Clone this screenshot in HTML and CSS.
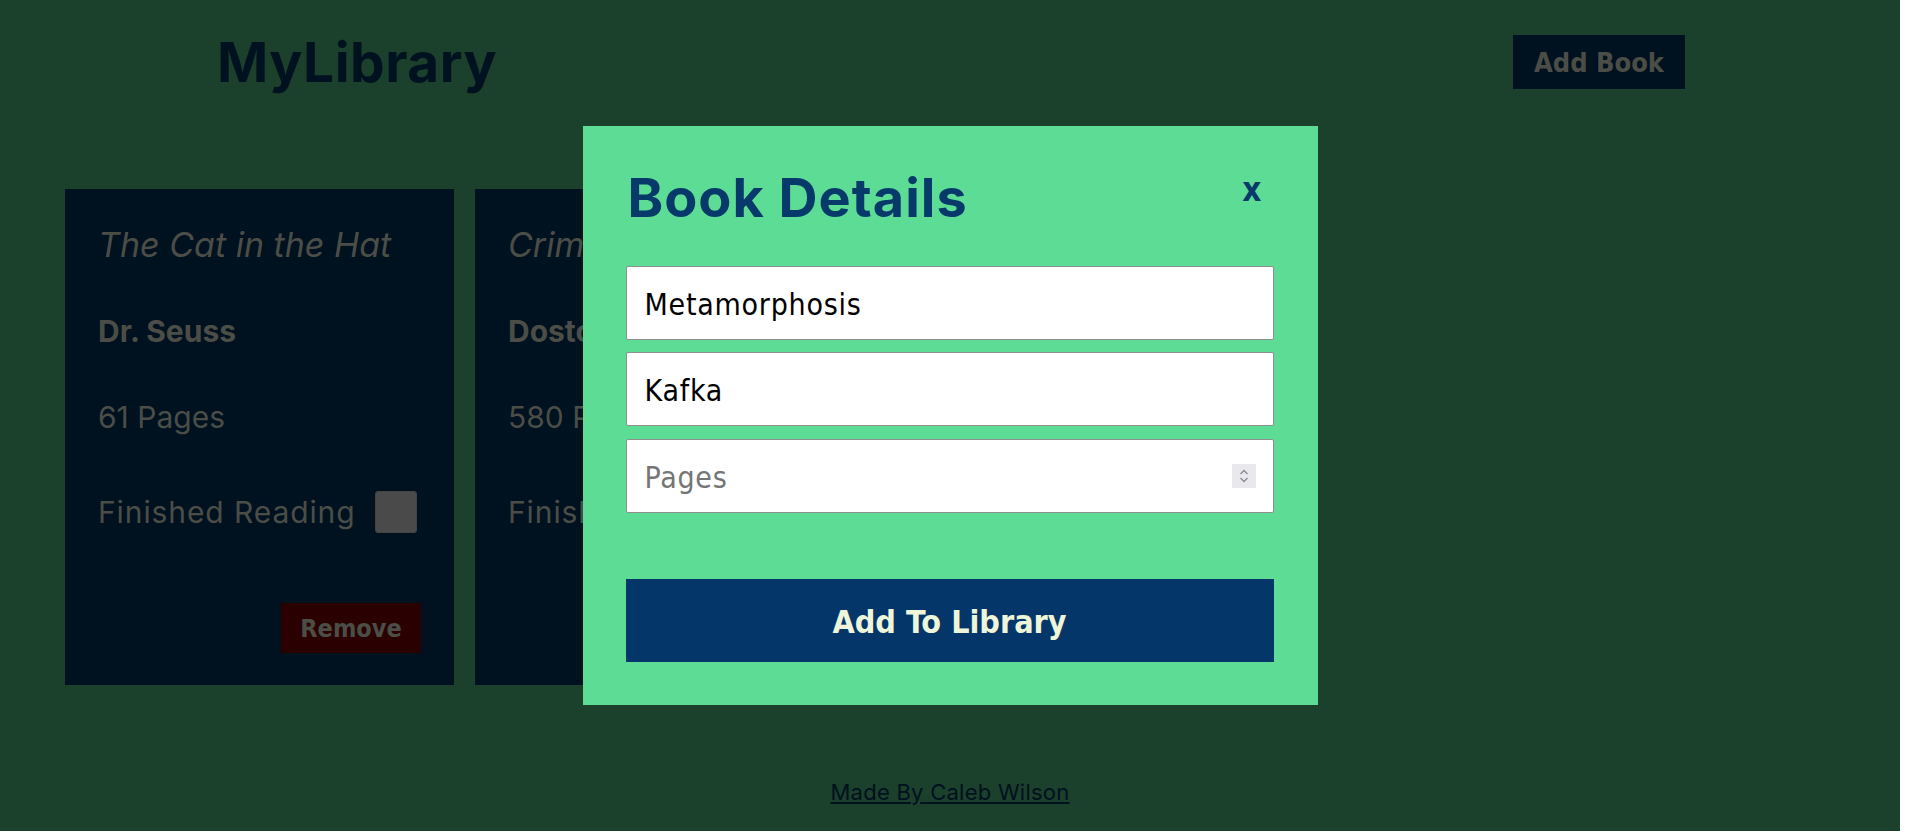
FILE: index.html
```html
<!DOCTYPE html>
<html lang="en">
<head>
<meta charset="utf-8">
<title>MyLibrary</title>
<link rel="stylesheet" href="styles.css">
</head>
<body>
<div class="page">
  <header class="header">
    <h1 class="logo">MyLibrary</h1>
    <button class="add-book">Add Book</button>
  </header>
  <main class="library">
    <article class="card">
      <p class="card-title">The Cat in the Hat</p>
      <p class="card-author">Dr. Seuss</p>
      <p class="card-pages">61 Pages</p>
      <label class="card-read">Finished Reading <span class="check"></span></label>
      <div class="card-actions"><button class="remove">Remove</button></div>
    </article>
    <article class="card">
      <p class="card-title">Crime and Punishment</p>
      <p class="card-author">Dostoevsky</p>
      <p class="card-pages">580 Pages</p>
      <label class="card-read">Finished Reading <span class="check"></span></label>
      <div class="card-actions"><button class="remove">Remove</button></div>
    </article>
  </main>
  <footer class="footer">
    <a href="#" class="credit">Made By Caleb Wilson</a>
  </footer>

  <div class="overlay">
    <form class="modal">
      <div class="modal-head">
        <h2 class="modal-title">Book Details</h2>
        <button type="button" class="close">x</button>
      </div>
      <input class="field" type="text" value="Metamorphosis">
      <input class="field" type="text" value="Kafka">
      <div class="number-wrap">
        <input class="field field-number" type="number" placeholder="Pages">
        <span class="spinner">
          <svg width="24" height="24" viewBox="0 0 24 24"><path d="M8.5 10 L12 6.5 L15.5 10" fill="none" stroke="#8b8b9a" stroke-width="1.4"/><path d="M8.5 14 L12 17.5 L15.5 14" fill="none" stroke="#8b8b9a" stroke-width="1.4"/></svg>
        </span>
      </div>
      <button type="button" class="submit">Add To Library</button>
    </form>
  </div>
</div>
</body>
</html>
```

FILE: styles.css
```css
* { box-sizing: border-box; }

html { background: #ffffff; }

body {
  margin: 0;
  font-family: "Inter", "Liberation Sans", sans-serif;
}

.page {
  position: relative;
  width: 1900px;
  height: 831px;
  background: #368056;
  display: flex;
  flex-direction: column;
  overflow: hidden;
}

.header {
  height: 124px;
  padding: 0 215px 0 217px;
  display: flex;
  align-items: center;
  justify-content: space-between;
}

.logo {
  margin: 0;
  font-size: 55px;
  line-height: 1;
  font-weight: 700;
  color: #00223e;
  letter-spacing: 0.5px;
}

.add-book {
  width: 172px;
  height: 54px;
  border: none;
  background: #00223e;
  color: #969a8e;
  font-family: "DejaVu Sans Condensed", "DejaVu Sans", sans-serif;
  font-stretch: semi-condensed;
  font-weight: 700;
  font-size: 27px;
  padding: 0;
}

.library {
  flex: 1;
  padding: 65px 0 0 65px;
  display: flex;
  gap: 21px;
  align-items: flex-start;
}

.card {
  width: 389px;
  height: 496px;
  background: #00223e;
  padding: 36px 33px 32px 33px;
  color: #969a8e;
  display: flex;
  flex-direction: column;
}

.card p { margin: 0; }

.card-title {
  font-size: 34px;
  line-height: 40px;
  font-style: italic;
  font-weight: 400;
  white-space: nowrap;
}

.card-author {
  margin-top: 46px !important;
  font-size: 30px;
  line-height: 40px;
  font-weight: 700;
}

.card-pages {
  margin-top: 46px !important;
  font-size: 30px;
  line-height: 40px;
}

.card-read {
  margin-top: 54px;
  display: flex;
  align-items: center;
  gap: 19px;
  font-size: 30px;
  line-height: 40px;
  letter-spacing: 0.9px;
  white-space: nowrap;
}

.check {
  width: 42px;
  height: 42px;
  border-radius: 3px;
  background: #949494;
  border: 1px solid #8a8a8a;
  flex: none;
}

.card-actions {
  margin-top: 70px;
  display: flex;
  justify-content: flex-end;
}

.remove {
  width: 140px;
  height: 50px;
  border: none;
  padding: 0;
  background: #540000;
  color: #969a8e;
  font-family: "DejaVu Sans Condensed", "DejaVu Sans", sans-serif;
  font-stretch: semi-condensed;
  font-weight: 700;
  font-size: 25px;
}

.footer {
  height: 78px;
  display: flex;
  align-items: center;
  justify-content: center;
}

.credit {
  color: #00223e;
  font-size: 22px;
  letter-spacing: 0.25px;
  line-height: 1.2;
}

.overlay {
  position: absolute;
  inset: 0;
  background: rgba(0, 0, 0, 0.5);
  display: flex;
  align-items: center;
  justify-content: center;
}

.modal {
  width: 735px;
  height: 579px;
  background: #5cdc94;
  padding: 45px 44px 43px 43px;
  display: flex;
  flex-direction: column;
}

.modal-head {
  display: flex;
  justify-content: space-between;
  align-items: flex-start;
  margin-bottom: 41px;
}

.modal-title {
  margin: 0 0 0 2px;
  font-size: 54px;
  line-height: 1;
  font-weight: 700;
  letter-spacing: 1px;
  color: #073a6a;
}

.close {
  margin: 2px 12px 0 0;
  padding: 0;
  border: none;
  background: none;
  color: #073a6a;
  font-family: "DejaVu Sans Condensed", "DejaVu Sans", sans-serif;
  font-weight: 700;
  font-size: 33px;
  line-height: 1;
}

.field {
  display: block;
  width: 100%;
  height: 74px;
  margin: 0 0 12px 0;
  padding: 2px 18px 0 18px;
  border: 1px solid #8f8f8f;
  border-radius: 2px;
  background: #ffffff;
  color: #000000;
  font-family: "DejaVu Sans Condensed", "DejaVu Sans", sans-serif;
  font-stretch: semi-condensed;
  font-size: 30px;
  letter-spacing: 0.75px;
  outline: none;
}

.field::placeholder { color: #757575; }

.field-number { appearance: textfield; -moz-appearance: textfield; }
.field-number::-webkit-inner-spin-button,
.field-number::-webkit-outer-spin-button { -webkit-appearance: none; margin: 0; }

.number-wrap {
  position: relative;
  margin-top: 1px;
}

.number-wrap .field { margin-bottom: 0; }

.spinner {
  position: absolute;
  right: 18px;
  top: 25px;
  width: 24px;
  height: 24px;
  background: #e9e9ed;
  display: flex;
}

.submit {
  margin-top: 66px;
  width: 100%;
  height: 83px;
  border: none;
  padding: 3px 0 0 0;
  background: #04366a;
  color: #eef5d9;
  font-family: "DejaVu Sans Condensed", "DejaVu Sans", sans-serif;
  font-stretch: semi-condensed;
  font-weight: 700;
  font-size: 32px;
}
```
